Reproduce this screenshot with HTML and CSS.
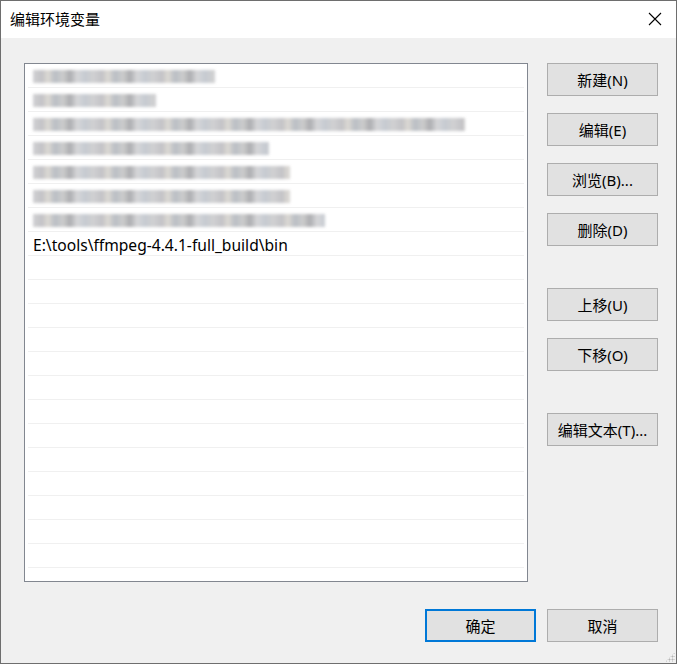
FILE: index.html
```html
<!DOCTYPE html>
<html lang="zh-CN">
<head>
    <meta charset="UTF-8">
    <title>编辑环境变量</title>
    <link rel="stylesheet" href="styles.css">
</head>
<body>
    <div class="dialog">
        <div class="title-bar">
            <span class="title-text">编辑环境变量</span>
            <span class="close-btn">
                <svg width="14" height="14" viewBox="0 0 14 14">
                    <path d="M1 1 L13 13 M13 1 L1 13" stroke="#000" stroke-width="1.1" fill="none"/>
                </svg>
            </span>
        </div>
        <div class="dialog-body">
            <div class="main-row">
                <div class="path-list">
                    <div class="path-row"><span class="blurred" style="width: 182px"></span></div>
                    <div class="path-row"><span class="blurred" style="width: 123px"></span></div>
                    <div class="path-row"><span class="blurred" style="width: 432px"></span></div>
                    <div class="path-row"><span class="blurred" style="width: 236px"></span></div>
                    <div class="path-row"><span class="blurred" style="width: 257px"></span></div>
                    <div class="path-row"><span class="blurred" style="width: 257px"></span></div>
                    <div class="path-row"><span class="blurred" style="width: 292px"></span></div>
                    <div class="path-row"><span class="path-text">E:\tools\ffmpeg-4.4.1-full_build\bin</span></div>
                    <div class="path-row"></div>
                    <div class="path-row"></div>
                    <div class="path-row"></div>
                    <div class="path-row"></div>
                    <div class="path-row"></div>
                    <div class="path-row"></div>
                    <div class="path-row"></div>
                    <div class="path-row"></div>
                    <div class="path-row"></div>
                    <div class="path-row"></div>
                    <div class="path-row"></div>
                    <div class="path-row"></div>
                    <div class="path-row"></div>
                    <div class="path-row"></div>
                </div>
                <div class="side-buttons">
                    <button class="win-btn">新建(N)</button>
                    <button class="win-btn">编辑(E)</button>
                    <button class="win-btn">浏览(B)...</button>
                    <button class="win-btn">删除(D)</button>
                    <button class="win-btn group-gap">上移(U)</button>
                    <button class="win-btn">下移(O)</button>
                    <button class="win-btn group-gap">编辑文本(T)...</button>
                </div>
            </div>
            <div class="footer">
                <button class="win-btn default-btn">确定</button>
                <button class="win-btn">取消</button>
            </div>
        </div>
        <div class="grip"></div>
    </div>
</body>
</html>
```

FILE: styles.css
```css
* {
    box-sizing: border-box;
}

html, body {
    margin: 0;
    padding: 0;
}

body {
    font-family: "Noto Sans", "Noto Sans CJK SC", sans-serif;
    font-size: 15px;
    color: #000;
    background: #f0f0f0;
}

.dialog {
    position: relative;
    width: 677px;
    height: 664px;
    border: 1px solid #6e6e6e;
    background: #f0f0f0;
    display: flex;
    flex-direction: column;
}

.title-bar {
    height: 37px;
    background: #fff;
    display: flex;
    align-items: center;
    justify-content: space-between;
    padding: 0 14px 2px 9px;
    flex-shrink: 0;
}

.title-text {
    font-size: 15px;
    color: #000;
}

.close-btn {
    display: flex;
    align-items: center;
}

.dialog-body {
    flex: 1;
    display: flex;
    flex-direction: column;
    padding: 25px 18px 0 23px;
}

.main-row {
    display: flex;
    gap: 19px;
}

.path-list {
    width: 504px;
    height: 519px;
    background: #fff;
    border: 1px solid #828790;
    overflow: hidden;
}

.path-row {
    height: 24px;
    margin: 0 3px;
    border-bottom: 1px solid #f0f0f0;
    display: flex;
    align-items: center;
    padding-left: 5px;
    white-space: nowrap;
}

.path-text {
    font-size: 15.6px;
    line-height: 20px;
    margin-top: 3px;
}

.blurred {
    display: block;
    height: 13px;
    margin-top: 1px;
    background:
        repeating-linear-gradient(90deg,
            #c9c9cb 0px, #b9b9bd 9px, #d7d3cc 15px, #aeb3bb 22px,
            #c4c4c4 30px, #9e9fa3 37px, #d0d0d2 44px, #bcc2ca 52px, #c8c8c8 60px);
    filter: blur(1.8px);
    opacity: 0.85;
}

.side-buttons {
    display: flex;
    flex-direction: column;
    gap: 17px;
}

.win-btn {
    width: 111px;
    height: 33px;
    background: #e1e1e1;
    border: 1px solid #adadad;
    font-family: "Noto Sans", "Noto Sans CJK SC", sans-serif;
    font-size: 15px;
    color: #000;
    padding: 0;
    margin: 0;
}

.group-gap {
    margin-top: 25px;
}

.footer {
    display: flex;
    justify-content: flex-end;
    gap: 11px;
    margin-top: 27px;
}

.default-btn {
    border: 2px solid #0078d7;
}

.grip {
    position: absolute;
    right: 1px;
    bottom: 1px;
    width: 10px;
    height: 10px;
    background:
        radial-gradient(circle, #b5b5b5 0.9px, transparent 1.1px) 0 0 / 3px 3px;
    clip-path: polygon(100% 0, 100% 100%, 0 100%);
}
```
